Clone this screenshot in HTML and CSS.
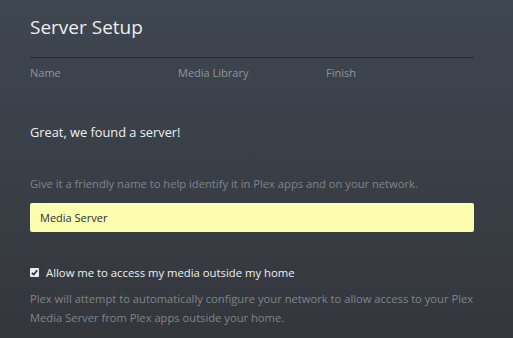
FILE: index.html
```html
<!DOCTYPE html>
<html>
<head>
<meta charset="utf-8">
<link rel="stylesheet" href="styles.css">
</head>
<body>
<div class="page">
  <h1 class="title">Server Setup</h1>
  <div class="steps">
    <span class="step">Name</span>
    <span class="step">Media Library</span>
    <span class="step">Finish</span>
  </div>
  <h2 class="found">Great, we found a server!</h2>
  <p class="hint">Give it a friendly name to help identify it in Plex apps and on your network.</p>
  <div class="input">Media Server</div>
  <label class="check">
    <span class="box"><svg width="9" height="9" viewBox="0 0 9 9"><path d="M1.8 4.8 L3.7 6.6 L7.3 2.2" fill="none" stroke="#2b2e33" stroke-width="1.7"/></svg></span>
    <span class="check-label">Allow me to access my media outside my home</span>
  </label>
  <p class="desc">Plex will attempt to automatically configure your network to allow access to your Plex Media Server from Plex apps outside your home.</p>
</div>
</body>
</html>
```
FILE: styles.css
```css
html, body {
  margin: 0;
  padding: 0;
  height: 100%;
}
body {
  background: linear-gradient(180deg, #3e4650 0%, #3a3f47 50%, #34363c 100%);
  font-family: "Open Sans", "Noto Sans", sans-serif;
  overflow: hidden;
}
.page {
  width: 444px;
  padding: 14px 0 0 30px;
}
.title {
  margin: 0;
  font-size: 19px;
  font-weight: 400;
  color: #eceeef;
  line-height: 26px;
  padding-bottom: 17px;
  border-bottom: 1px solid #272c32;
}
.steps {
  display: grid;
  grid-template-columns: 148px 148px 148px;
  font-size: 11px;
  color: #8f969d;
  line-height: 15px;
  padding-top: 7px;
}
.found {
  margin: 43px 0 0;
  font-size: 12.8px;
  font-weight: 400;
  color: #eef0f1;
  line-height: 18px;
}
.hint {
  margin: 35px 0 0;
  font-size: 11.2px;
  color: #7f858b;
  line-height: 15px;
}
.input {
  margin-top: 12px;
  height: 29px;
  box-sizing: border-box;
  background: #fdfdaf;
  border-radius: 2px;
  padding: 0 10px;
  font-size: 11px;
  line-height: 29px;
  color: #2b2d30;
}
.check {
  display: flex;
  align-items: center;
  gap: 7px;
  margin-top: 32px;
}
.box {
  width: 9px;
  height: 9px;
  background: #e9eaeb;
  border-radius: 1px;
  display: flex;
}
.check-label {
  font-size: 11.3px;
  color: #eef0f1;
  line-height: 17px;
}
.desc {
  margin: 8px 0 0;
  font-size: 11.2px;
  color: #7f858b;
  line-height: 19px;
}
```
